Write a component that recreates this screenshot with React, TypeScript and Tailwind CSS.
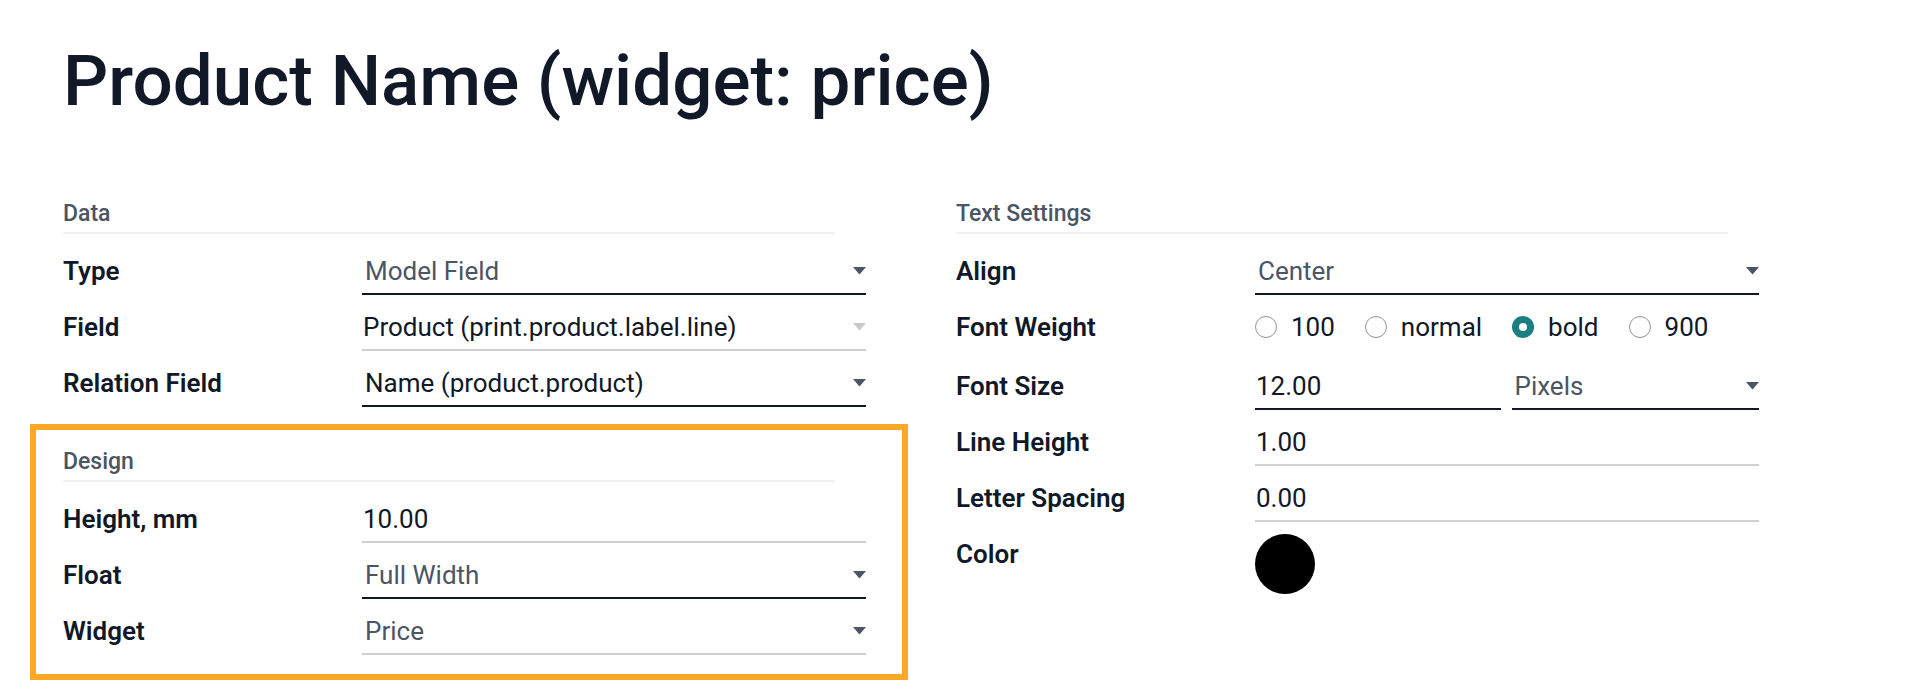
import type { ReactNode } from 'react'

function Caret({ muted = false }: { muted?: boolean }) {
  return (
    <svg width="13" height="8" viewBox="0 0 13 8" className="shrink-0">
      <polygon points="0,0 13,0 6.5,7.5" fill={muted ? '#c9c9c9' : '#4b5563'} />
    </svg>
  )
}

function GroupHeader({ title }: { title: string }) {
  return (
    <div className="w-[772px] pb-[4px] border-b-2 border-[#f2f2f2] text-[23px] leading-[28px] font-medium text-[#4b5563]">
      {title}
    </div>
  )
}

function Row({ label, children }: { label: string; children: ReactNode }) {
  return (
    <div className="grid grid-cols-[299px_504px]">
      <div className="text-[26px] leading-[36px] font-semibold text-[#111827]">{label}</div>
      {children}
    </div>
  )
}

interface FieldProps {
  value: string
  select?: boolean
  dark?: boolean
  muted?: boolean
  className?: string
}

function Field({ value, select = false, dark = false, muted = false, className = '' }: FieldProps) {
  return (
    <div
      className={`flex items-start justify-between pb-[4px] border-b-2 text-[26px] leading-[36px] ${
        dark ? 'border-[#111827]' : 'border-[#d0d0d0]'
      } ${select ? 'pl-[3px] text-[#4b5563]' : 'pl-px text-[#111827]'} ${className}`}
    >
      <span>{value}</span>
      {(select || muted) && (
        <span className="h-[36px] flex items-center">
          <Caret muted={muted} />
        </span>
      )}
    </div>
  )
}

function Radio({ label, checked = false }: { label: string; checked?: boolean }) {
  return (
    <label className="flex items-center gap-[14px]">
      {checked ? (
        <span className="w-[22px] h-[22px] rounded-full bg-[#1b7f82] flex items-center justify-center">
          <span className="w-[8px] h-[8px] rounded-full bg-white" />
        </span>
      ) : (
        <span className="w-[22px] h-[22px] rounded-full border-[1.5px] border-[#8f949b] bg-white" />
      )}
      <span>{label}</span>
    </label>
  )
}

export default function App() {
  return (
    <div className="min-h-screen bg-white pl-[63px] pt-[37px] font-[Roboto,sans-serif] text-[#111827]">
      <h1 className="text-[71px] leading-[88px] font-medium">Product Name (widget: price)</h1>

      <div className="mt-[75px] flex gap-[90px]">
        <div className="w-[803px]">
          <GroupHeader title="Data" />
          <div className="mt-[19px] flex flex-col gap-[14px]">
            <Row label="Type">
              <Field value="Model Field" select dark />
            </Row>
            <Row label="Field">
              <Field value="Product (print.product.label.line)" muted />
            </Row>
            <Row label="Relation Field">
              <Field value="Name (product.product)" dark className="!text-[#111827]" select />
            </Row>
          </div>

          <div className="mt-[17px] -ml-[33px] -mr-[42px] border-[6px] border-[#ffa726] pl-[27px] pr-[36px] pt-[18px] pb-[19px]">
            <GroupHeader title="Design" />
            <div className="mt-[19px] flex flex-col gap-[14px]">
              <Row label="Height, mm">
                <Field value="10.00" />
              </Row>
              <Row label="Float">
                <Field value="Full Width" select dark />
              </Row>
              <Row label="Widget">
                <Field value="Price" select />
              </Row>
            </div>
          </div>
        </div>

        <div className="w-[804px]">
          <GroupHeader title="Text Settings" />
          <div className="mt-[19px] flex flex-col gap-[14px]">
            <Row label="Align">
              <Field value="Center" select dark />
            </Row>
            <Row label="Font Weight">
              <div className="h-[45px] pb-[9px] flex items-center gap-[30px] text-[26px] leading-[36px]">
                <Radio label="100" />
                <Radio label="normal" />
                <Radio label="bold" checked />
                <Radio label="900" />
              </div>
            </Row>
            <Row label="Font Size">
              <div className="flex gap-[11px]">
                <Field value="12.00" dark className="flex-1" />
                <Field value="Pixels" select dark className="flex-1" />
              </div>
            </Row>
            <Row label="Line Height">
              <Field value="1.00" />
            </Row>
            <Row label="Letter Spacing">
              <Field value="0.00" />
            </Row>
            <Row label="Color">
              <div className="h-[60px]">
                <div className="-mt-[2px] w-[60px] h-[60px] rounded-full bg-black" />
              </div>
            </Row>
          </div>
        </div>
      </div>
    </div>
  )
}
